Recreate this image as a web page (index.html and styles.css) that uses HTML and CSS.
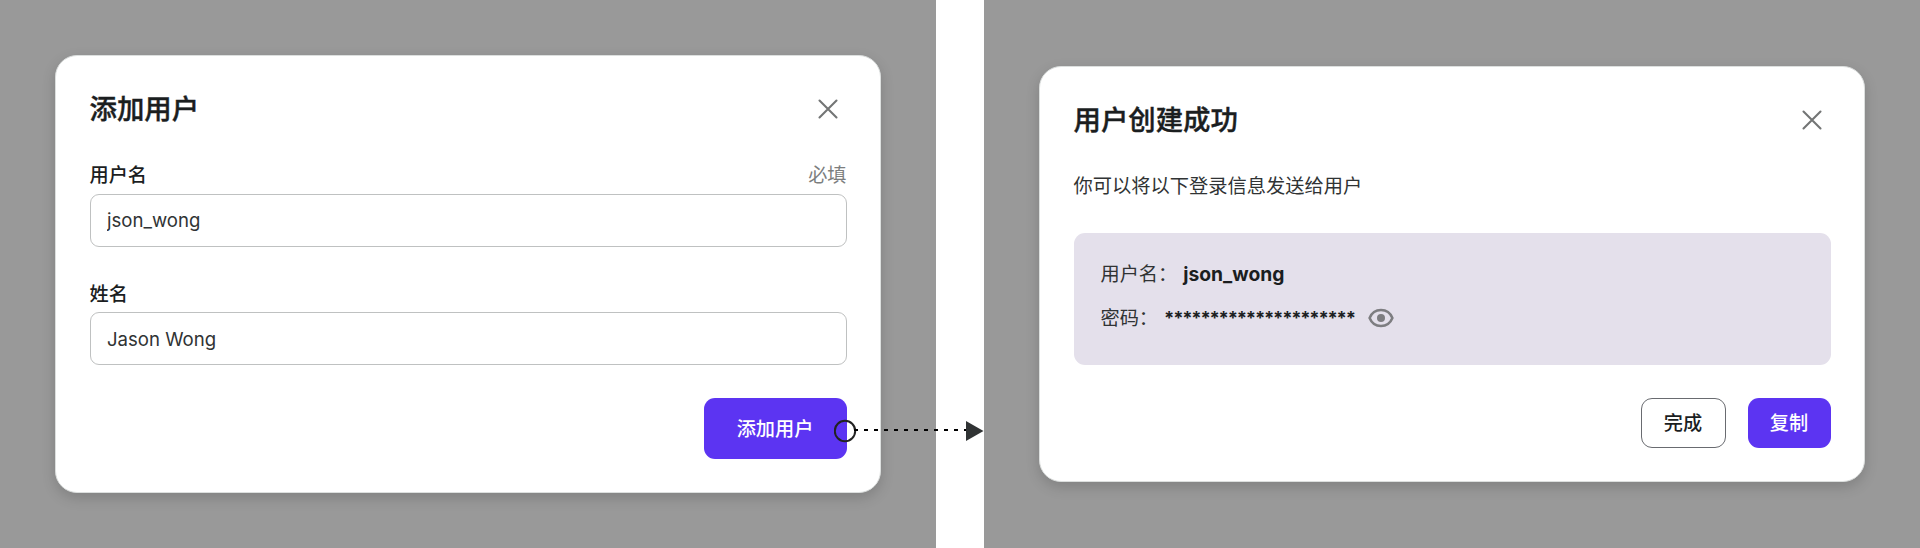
FILE: index.html
```html
<!DOCTYPE html>
<html lang="zh-CN">
<head>
<meta charset="utf-8">
<title>添加用户</title>
<link rel="stylesheet" href="styles.css">
</head>
<body>
<main class="flow">
  <section class="panel">
    <div class="dialog">
      <header class="dialog-head">
        <h1 class="title">添加用户</h1>
        <svg class="close" viewBox="0 0 20 20"><path d="M1.500 1.500L18.500 18.500M18.500 1.500L1.500 18.500"/></svg>
      </header>
      <div class="field">
        <div class="label-row"><label class="label" for="login">用户名</label><span class="hint">必填</span></div>
        <input class="input input-first" id="login" value="json_wong">
      </div>
      <div class="field field-second">
        <div class="label-row label-row-second"><label class="label" for="name">姓名</label></div>
        <input class="input" id="name" value="Jason Wong">
      </div>
      <div class="actions">
        <button class="btn btn-large">添加用户</button>
      </div>
    </div>
  </section>
  <section class="panel">
    <div class="dialog">
      <header class="dialog-head">
        <h1 class="title">用户创建成功</h1>
        <svg class="close" viewBox="0 0 20 20"><path d="M1.500 1.500L18.500 18.500M18.500 1.500L1.500 18.500"/></svg>
      </header>
      <p class="message">你可以将以下登录信息发送给用户</p>
      <div class="info">
        <div class="info-row"><span>用户名：</span><b class="value">json_wong</b></div>
        <div class="info-row"><span>密码：</span><b class="value stars">*********************</b>
          <svg class="eye" viewBox="0 0 26 20"><path d="M1.600 10C3.600 5 8 2 13 2s9.400 3 11.400 8c-2 5-6.400 8-11.400 8s-9.400-3-11.400-8z"/><circle cx="13" cy="10" r="4"/></svg>
        </div>
      </div>
      <div class="actions">
        <button class="btn btn-outline">完成</button>
        <button class="btn btn-copy">复制</button>
      </div>
    </div>
  </section>
  <svg class="connector" viewBox="0 0 152 24">
    <circle cx="11" cy="12" r="10.200"/>
    <path class="connector-line" d="M20 11H133"/>
    <path class="connector-head" d="M132 2L149.500 12L132 22Z"/>
  </svg>
</main>
</body>
</html>
```
FILE: styles.css
```css
* { box-sizing: border-box; }
body {
  margin: 0;
  font-family: Inter, "Noto Sans CJK SC", sans-serif;
  font-size: 18.6px;
  color: #303334;
}
.flow {
  position: relative;
  display: flex;
  gap: 48px;
  width: 1920px;
  height: 548px;
  background: #fff;
  overflow: hidden;
}
.panel {
  display: flex;
  align-items: center;
  justify-content: center;
  width: 936px;
  background: #999;
}
.dialog {
  width: 826px;
  padding: 34px 33.5px 33px;
  background: #fff;
  border: 1px solid #dcdfde;
  border-radius: 22px;
  box-shadow: 0 5px 14px rgba(0, 0, 0, .16);
}
.dialog-head {
  display: flex;
  align-items: center;
  justify-content: space-between;
  height: 38px;
  padding-right: 9px;
}
.title {
  margin: 0;
  font-size: 27.4px;
  line-height: 38px;
  font-weight: 500;
  color: #1b1e1f;
  -webkit-text-stroke: .4px #1b1e1f;
}
.close { width: 20px; height: 20px; fill: none; stroke: #737575; stroke-width: 2.100; stroke-linecap: round; }
.field { margin-top: 34px; }
.field-second { margin-top: 33px; }
.label-row {
  display: flex;
  justify-content: space-between;
  height: 32px;
  line-height: 26px;
  font-size: 19.2px;
}
.label-row-second { line-height: 28px; }
.label { font-weight: 500; color: #1b1e1f; }
.hint { color: #7c7e7e; }
.input {
  display: block;
  width: 100%;
  height: 53px;
  padding: 0 16.5px;
  border: 1px solid #bfc1c1;
  border-radius: 9px;
  font: inherit;
  color: inherit;
  background: #fff;
  outline: 0;
}
.input-first { padding-bottom: 2px; }
.actions { display: flex; justify-content: flex-end; gap: 22px; margin-top: 33px; }
.btn {
  height: 50px;
  padding: 0 22px 3px;
  border: 0;
  border-radius: 11px;
  background: #5c34f2;
  color: #fff;
  font: 500 19.2px Inter, "Noto Sans CJK SC", sans-serif;
}
.btn-large { width: 143px; height: 61px; padding: 0 0 2px; }
.btn-copy { width: 83px; }
.btn-outline { width: 85px; border: 1px solid #696b70; background: #fff; color: #1b1e1f; }
.message { margin: 33px 0 0; font-size: 19.25px; line-height: 28px; }
.info {
  display: grid;
  gap: 16px;
  align-content: start;
  height: 132px;
  margin-top: 33px;
  padding: 27px;
  border-radius: 11px;
  background: #e4e0eb;
}
.info-row { display: flex; align-items: center; height: 28px; font-size: 19.2px; line-height: 28px; }
.value { margin-left: 6px; font-size: 19.3px; font-weight: 700; color: #1b1e1f; }
.stars { font-size: 18.4px; letter-spacing: -1.2px; }
.eye { width: 26px; height: 20px; margin-left: 13px; fill: none; stroke: #7d7d80; stroke-width: 2.500; }
.eye circle { fill: #7d7d80; stroke: none; }
.connector { position: absolute; left: 834px; top: 419px; width: 152px; height: 24px; }
.connector circle { fill: none; stroke: #222; stroke-width: 2; }
.connector-line { stroke: #000; stroke-width: 2; stroke-dasharray: 4 6; }
.connector-head { fill: #303334; }
```
